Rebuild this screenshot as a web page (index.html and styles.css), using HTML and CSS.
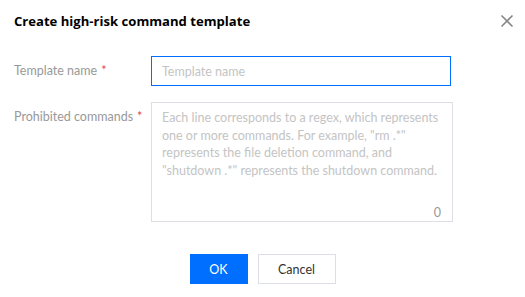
FILE: index.html
```html
<!DOCTYPE html>
<html lang="en">
<head>
    <meta charset="UTF-8">
    <meta name="viewport" content="width=device-width, initial-scale=1.0">
    <title>Create high-risk command template</title>
    <link rel="stylesheet" href="styles.css">
</head>
<body>

    <!-- Диалог -->
    <div class="dialog">
        <div class="dialog-header">
            <h3 class="dialog-title">Create high-risk command template</h3>
            <button class="close-btn" aria-label="Close">
                <svg width="14" height="14" viewBox="0 0 14 14">
                    <path d="M1.5 1.5 L12.5 12.5 M12.5 1.5 L1.5 12.5" stroke="#888" stroke-width="1.6" fill="none"/>
                </svg>
            </button>
        </div>

        <div class="form">
            <div class="form-row">
                <label class="form-label">Template name<span class="req">*</span></label>
                <input type="text" class="text-input" placeholder="Template name">
            </div>
            <div class="form-row">
                <label class="form-label">Prohibited commands<span class="req">*</span></label>
                <div class="area-wrap">
                    <textarea class="text-area" placeholder="Each line corresponds to a regex, which represents one or more commands. For example, &quot;rm .*&quot; represents the file deletion command, and &quot;shutdown .*&quot; represents the shutdown command."></textarea>
                    <span class="counter">0</span>
                </div>
            </div>
        </div>

        <div class="dialog-footer">
            <button class="btn btn-primary">OK</button>
            <button class="btn btn-default">Cancel</button>
        </div>
    </div>

</body>
</html>
```

FILE: styles.css
```css
body {
    font-family: Lato, "Open Sans", sans-serif;
    background-color: #fff;
    color: #000;
    margin: 0;
    padding: 0;
}

.dialog {
    width: 525px;
    height: 297px;
    box-sizing: border-box;
    padding: 0 14px;
}

/* Шапка */
.dialog-header {
    display: flex;
    justify-content: space-between;
    align-items: center;
    height: 42px;
}

.dialog-title {
    margin: 0;
    font-family: "Open Sans", sans-serif;
    font-size: 13.1px;
    font-weight: 700;
}

.close-btn {
    background: none;
    border: none;
    padding: 0;
    margin-right: -3px;
    width: 14px;
    height: 14px;
    cursor: pointer;
}

/* Форма */
.form {
    display: flex;
    flex-direction: column;
    gap: 16px;
    margin-top: 14px;
}

.form-row {
    display: flex;
    align-items: flex-start;
}

.form-label {
    width: 137px;
    font-size: 12.5px;
    color: #999;
    line-height: 30px;
}

.req {
    color: #e54545;
    margin-left: 4px;
}

.text-input {
    width: 300px;
    height: 30px;
    box-sizing: border-box;
    border: 1px solid #006eff;
    padding: 0 10px;
    font-family: inherit;
    font-size: 12.5px;
    outline: none;
}

.text-input::placeholder,
.text-area::placeholder {
    color: #c4c4c4;
}

.area-wrap {
    position: relative;
    width: 302px;
    height: 120px;
}

.text-area {
    width: 100%;
    height: 100%;
    box-sizing: border-box;
    border: 1px solid #dcdfe6;
    padding: 6px 10px;
    font-family: inherit;
    font-size: 12.5px;
    line-height: 17.5px;
    resize: none;
    outline: none;
}

.counter {
    position: absolute;
    right: 12px;
    bottom: 2px;
    font-size: 12.5px;
    color: #999;
}

/* Кнопки */
.dialog-footer {
    display: flex;
    justify-content: center;
    gap: 10px;
    margin-top: 32px;
}

.btn {
    height: 30px;
    box-sizing: border-box;
    font-family: inherit;
    font-size: 12.5px;
    cursor: pointer;
}

.btn-primary {
    width: 58px;
    background-color: #006eff;
    color: #fff;
    border: none;
}

.btn-default {
    width: 78px;
    background-color: #fff;
    color: #333;
    border: 1px solid #dcdfe6;
}
```
